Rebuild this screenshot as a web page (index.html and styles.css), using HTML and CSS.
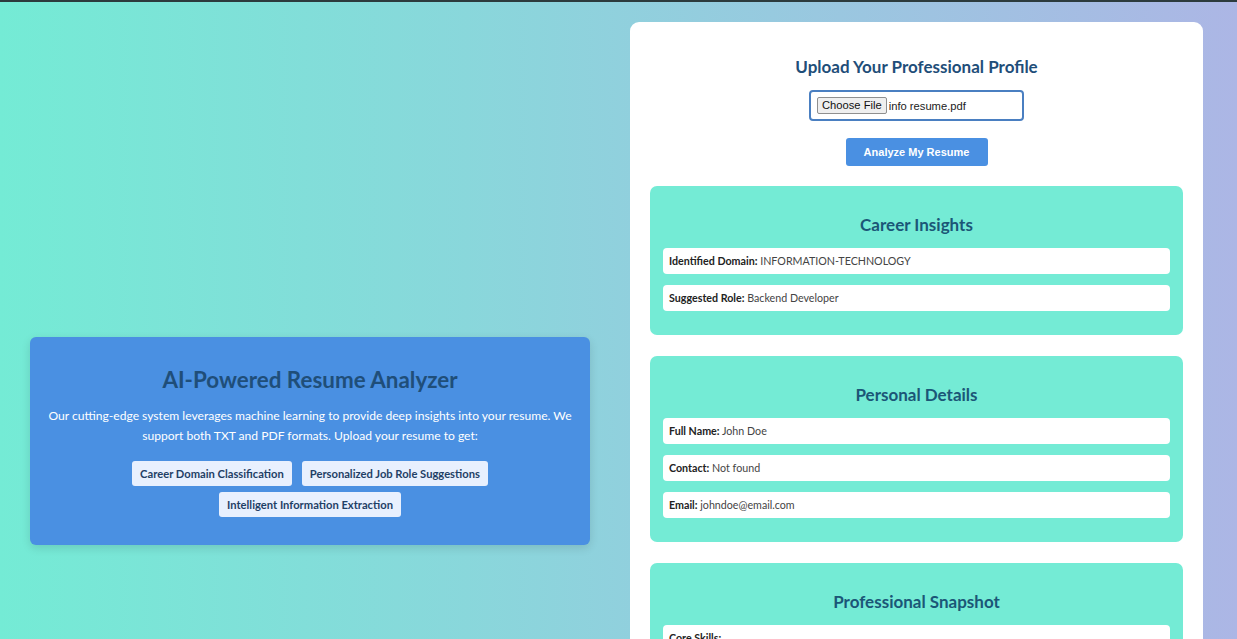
FILE: index.html
```html
<!DOCTYPE html>
<html lang="en">
<head>
<meta charset="utf-8">
<title>AI-Powered Resume Analyzer</title>
<link rel="stylesheet" href="styles.css">
</head>
<body>
<div class="page">
  <section class="intro">
    <h1 class="intro-title">AI-Powered Resume Analyzer</h1>
    <p class="intro-text">Our cutting-edge system leverages machine learning to provide deep insights into your resume. We support both TXT and PDF formats. Upload your resume to get:</p>
    <div class="tags">
      <span class="tag">Career Domain Classification</span>
      <span class="tag">Personalized Job Role Suggestions</span>
      <span class="tag">Intelligent Information Extraction</span>
    </div>
  </section>

  <main class="panel">
    <h2 class="panel-title">Upload Your Professional Profile</h2>
    <div class="file-box">
      <span class="file-btn">Choose File</span>
      <span class="file-name">info resume.pdf</span>
    </div>
    <div class="actions"><button class="analyze">Analyze My Resume</button></div>

    <div class="card">
      <h3 class="card-title">Career Insights</h3>
      <div class="item"><b>Identified Domain:</b> INFORMATION-TECHNOLOGY</div>
      <div class="item"><b>Suggested Role:</b> Backend Developer</div>
    </div>

    <div class="card">
      <h3 class="card-title">Personal Details</h3>
      <div class="item"><b>Full Name:</b> John Doe</div>
      <div class="item"><b>Contact:</b> Not found</div>
      <div class="item"><b>Email:</b> johndoe@email.com</div>
    </div>

    <div class="card">
      <h3 class="card-title">Professional Snapshot</h3>
      <div class="item item-tall"><b>Core Skills:</b>
        <div class="skills">python, java, sql, spring boot, rest api, docker, kubernetes, aws, git, postgresql, mongodb, microservices, linux, ci/cd, agile</div>
      </div>
      <div class="item"><b>Experience:</b> 3 years</div>
      <div class="item"><b>Education:</b> B.Tech in Computer Science</div>
      <div class="item"><b>Certifications:</b> Not found</div>
    </div>
  </main>
</div>
</body>
</html>
```

FILE: styles.css
```css
html, body {
  margin: 0;
  padding: 0;
}
body {
  border-top: 2px solid #2c3b3d;
  background: linear-gradient(to right, #74ebd5, #acb6e5);
  font-family: Lato, "Open Sans", sans-serif;
  min-height: 100vh;
}
.page {
  display: flex;
  align-items: center;
  gap: 40px;
  padding: 20px 34px 20px 30px;
}
.intro {
  flex: 0 0 560px;
  box-sizing: border-box;
  background: #4a90e2;
  border-radius: 6px;
  box-shadow: 0 3px 10px rgba(0, 0, 0, 0.12);
  padding: 29px 18px 28px;
  text-align: center;
}
.intro-title {
  margin: 0 0 12px;
  font-size: 22.4px;
  font-weight: 700;
  color: #1f4e79;
  line-height: 28px;
}
.intro-text {
  margin: 0 0 15px;
  font-size: 12.1px;
  line-height: 20px;
  color: #ffffff;
}
.tags {
  display: flex;
  flex-wrap: wrap;
  justify-content: center;
  gap: 6px 10px;
  padding: 0 60px;
}
.tag {
  background: #e8f0fe;
  color: #1f3f66;
  font-size: 11.2px;
  font-weight: 700;
  line-height: 15px;
  padding: 5px 8px;
  border-radius: 3px;
}
.panel {
  flex: 0 0 573px;
  box-sizing: border-box;
  background: #ffffff;
  border-radius: 9px;
  padding: 34px 20px 20px;
}
.panel-title {
  margin: 0 0 12px;
  text-align: center;
  font-size: 17px;
  font-weight: 700;
  color: #1f4e79;
  line-height: 22px;
}
.file-box {
  width: 215px;
  height: 31px;
  box-sizing: border-box;
  margin: 0 auto;
  border: 2px solid #4a7fc1;
  border-radius: 4px;
  display: flex;
  align-items: center;
  padding: 0 6px;
  gap: 2px;
  font-family: "Liberation Sans", Arial, sans-serif;
  font-size: 11.2px;
  color: #222;
}
.file-btn {
  background: #efefef;
  border: 1px solid #8f8f8f;
  border-radius: 2px;
  padding: 1px 4px;
  line-height: 13px;
  color: #111;
}
.actions {
  display: flex;
  justify-content: center;
  margin: 17px 0 20px;
}
.analyze {
  width: 142px;
  height: 28px;
  border: none;
  border-radius: 3px;
  background: #4a90e2;
  color: #ffffff;
  font-family: "Liberation Sans", Arial, sans-serif;
  font-size: 11px;
  font-weight: 700;
}
.card {
  background: #74ebd5;
  border-radius: 7px;
  padding: 27px 13px 24px;
  margin-bottom: 21px;
}
.card-title {
  margin: 0 0 11px;
  text-align: center;
  font-size: 17px;
  font-weight: 700;
  color: #1b5677;
  line-height: 24px;
}
.item {
  background: #ffffff;
  border-radius: 4px;
  padding: 6px 6px;
  font-size: 10.7px;
  line-height: 14px;
  color: #444;
  margin-bottom: 11px;
}
.item:last-child {
  margin-bottom: 0;
}
.item b {
  color: #222;
}
.skills {
  margin-top: 1px;
  line-height: 16px;
}
```
